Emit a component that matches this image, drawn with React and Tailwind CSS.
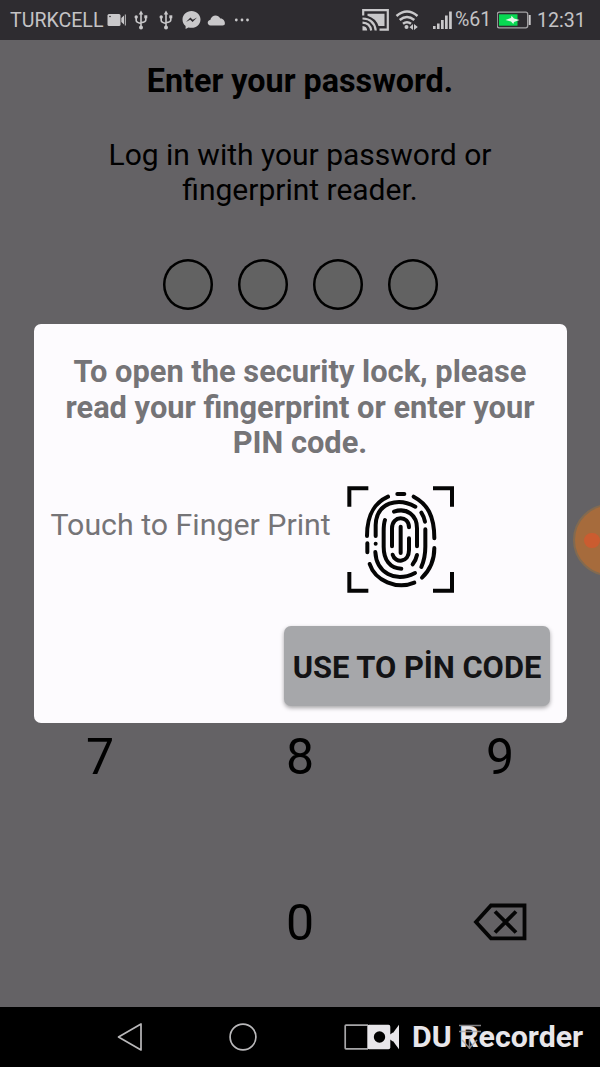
import React from 'react';

function Usb({ className }) {
  return (
    <svg className={className} width="14" height="20" viewBox="0 0 14 20" fill="none" stroke="#c9c8ca" strokeWidth="1.6">
      <path d="M7 3V17M2.2 7.5V10.5Q2.2 12.3 7 13.5M11.8 7.5V10Q11.8 12 7 12.8" />
      <path d="M7 0.5L9.3 4.5H4.7Z" fill="#c9c8ca" stroke="none" />
      <circle cx="7" cy="17.5" r="2" fill="#c9c8ca" stroke="none" />
      <circle cx="2.2" cy="7" r="1.7" fill="#c9c8ca" stroke="none" />
      <path d="M10.3 5.3H13.3V8.3H10.3Z" fill="#c9c8ca" stroke="none" />
    </svg>
  );
}

function StatusBar() {
  return (
    <header className="flex h-10 items-center bg-[#2e2c30] pl-2.5 text-xl leading-none text-[#c4c3c5]">
      <span className="w-[97px] pt-px whitespace-nowrap text-[19.6px]">TURKCELL</span>
      <svg className="shrink-0" width="19" height="14" viewBox="0 0 19 14" fill="#c9c8ca">
        <path d="M2 1H12Q13.5 1 13.5 2.5V11.5Q13.5 13 12 13H2Q0.5 13 0.5 11.5V2.5Q0.5 1 2 1Z" />
        <path d="M14.3 5L17 2.5V11.5L14.3 9ZM17.8 1.5H18.8V12.5H17.8Z" />
        <circle cx="3" cy="3.5" r="0.8" fill="#2e2c30" />
      </svg>
      <Usb className="ml-2 shrink-0" />
      <Usb className="ml-[11px] shrink-0" />
      <svg className="ml-[9px] shrink-0" width="19" height="20" viewBox="0 0 19 20">
        <path d="M9.5 1C4.5 1 0.5 4.7 0.5 9.5C0.5 12.2 1.7 14.5 3.6 16V19L6.4 17.4C13 19.2 18.5 15.3 18.5 9.5C18.5 4.7 14.5 1 9.5 1Z" fill="#c9c8ca" />
        <path d="M4 12L8.4 7.5L10.8 9.7L15 7.5L10.6 12L8.2 9.8Z" fill="#2e2c30" />
      </svg>
      <svg className="ml-1.5 shrink-0" width="19" height="12" viewBox="0 0 19 12" fill="#c9c8ca">
        <path d="M3.5 11.5C0 11.5 -0.3 6.5 3.3 6C4 1.5 10.5 -1 13.4 4.6C17.5 4.2 20 11.5 15.5 11.5Z" />
      </svg>
      <svg className="ml-2 shrink-0" width="16" height="4" viewBox="0 0 16 4" fill="#c9c8ca">
        <circle cx="2.3" cy="2" r="1.4" /><circle cx="8" cy="2" r="1.4" /><circle cx="13.5" cy="2" r="1.4" />
      </svg>
      <svg className="ml-[112px] shrink-0" width="28" height="22" viewBox="0 0 28 22" fill="none" stroke="#c9c8ca" strokeWidth="2.2">
        <path d="M1.2 6.5V1.2H25.8V20.6H17.5" />
        <path d="M5.5 4.8H22.5V17H16.5Q14 9.5 5.5 6.8Z" fill="#c9c8ca" stroke="none" />
        <path d="M0.5 9.5Q12.5 10 13.7 21.5M0.5 13.7Q8 14 9.2 21.5" />
        <path d="M0.5 17Q5 17.3 5.2 21.5H0.5Z" fill="#c9c8ca" stroke="none" />
      </svg>
      <svg className="ml-[5px] shrink-0" width="24" height="20" viewBox="0 0 24 20" fill="none" stroke="#c9c8ca" strokeWidth="2.5">
        <path d="M1.5 6Q12 -3 22.5 6M4.7 10Q12 4 19.3 10M8 13.7Q12 10.7 16 13.7" />
        <circle cx="11.5" cy="17" r="2" fill="#c9c8ca" stroke="none" />
        <path d="M14.5 17.2L18 14V20ZM19 14L22.8 17L19 20Z" fill="#c9c8ca" stroke="none" />
      </svg>
      <svg className="ml-[13px] shrink-0" width="21" height="20" viewBox="0 0 21 20" fill="#c9c8ca">
        <path d="M1 16H3.6V19H1ZM5 13.5H7.6V19H5ZM9 10H11.7V19H9ZM13 5.5H15.7V19H13ZM17.1 1.5H19.8V19H17.1Z" />
      </svg>
      <span className="ml-[2px] w-[42px] whitespace-nowrap text-[19.6px]">%61</span>
      <svg className="shrink-0" width="35" height="18" viewBox="0 0 35 18">
        <rect x="0.2" y="1.2" width="30.5" height="15.6" rx="2" fill="none" stroke="#a5a4a6" strokeWidth="1.3" />
        <rect x="2" y="3.3" width="18.5" height="11.4" fill="#08d952" />
        <path d="M8.5 9L14 7L14.5 4.8L17 7.5L22.5 9L17 11L16.3 13L14 10.6Z" fill="#e3f7e8" />
        <path d="M31.7 4H33.7V14H31.7Z" fill="#c9c8ca" />
      </svg>
      <span className="ml-[5px] pt-[2px] whitespace-nowrap text-[19.6px]">12:31</span>
    </header>
  );
}

function Fingerprint() {
  return (
    <svg className="h-[130px] w-[130px] shrink-0" viewBox="0 0 390 390" fill="none" stroke="#050505" strokeWidth="12" strokeLinecap="round">
      <path d="M43 89V40H94M300 40H351V89M43 297V347H94M300 347H351V297" strokeLinecap="square" />
      <path d="M187 57H208" />
      <path d="M159 65C118 84 96 118 96 183" />
      <path d="M236 65C277 87 298 122 298 190" />
      <path d="M97 205V232M122 206V206.1" />
      <path d="M122 183V150C124 82 190 66 241 95" />
      <path d="M177 110C215 97 246 120 246 160V214" />
      <path d="M259 113Q267 125 270 140" />
      <path d="M271 163V215C271 240 268 255 259 276" />
      <path d="M298 219C298 260 285 285 261 308" />
      <path d="M150 135C146 145 146 155 146 170V215C146 255 165 280 199 281" />
      <path d="M171 214V160C171 120 222 120 222 157" />
      <path d="M222 190V225C222 265 180 265 173 239" />
      <path d="M197 155V234" />
      <path d="M246 240Q243 255 233 268" />
      <path d="M121 231C124 292 180 325 240 294" />
      <path d="M104 267C120 317 185 345 238 323" />
    </svg>
  );
}

function Dialog() {
  return (
    <section className="absolute top-[324px] left-[33.5px] flex h-[399px] w-[533px] flex-col rounded-[7px] bg-[#fdfbfe] text-[#757477]">
      <h2 className="mt-[30px] text-center text-[30.8px] leading-[35.5px] font-bold">
        To open the security lock, please<br />read your fingerprint or enter your<br />PIN code.
      </h2>
      <div className="mt-[14px] flex">
        <p className="mt-[32px] w-[283.5px] pl-[17px] text-[30.3px] leading-[36px] whitespace-nowrap">Touch to Finger Print</p>
        <div className="ml-[18px]"><Fingerprint /></div>
      </div>
      <button className="mt-[21px] ml-[250.5px] h-20 w-[266px] rounded-[7px] bg-[#a6a7aa] pt-[5px] text-[30.9px] leading-none font-bold whitespace-nowrap text-[#131315] shadow-[0_2px_4px_rgba(0,0,0,0.35)]">
        USE TO PİN CODE
      </button>
    </section>
  );
}

function NavBar() {
  return (
    <footer className="flex h-[60px] items-center bg-black pl-[117px]">
      <svg className="shrink-0" width="26" height="30" viewBox="0 0 26 30" fill="none" stroke="#b9b8ba" strokeWidth="1.7" strokeLinejoin="round">
        <path d="M24 2V28L1.5 15Z" />
      </svg>
      <svg className="ml-[86px] shrink-0" width="28" height="28" viewBox="0 0 28 28" fill="none" stroke="#b9b8ba" strokeWidth="1.7">
        <circle cx="14" cy="14" r="12.9" />
      </svg>
      <svg className="ml-[87px] shrink-0" width="55" height="26" viewBox="0 0 55 26">
        <path d="M24 1.2H2Q1.2 1.2 1.2 2V24Q1.2 24.8 2 24.8H24" fill="none" stroke="#a7a6a8" strokeWidth="1.7" />
        <path d="M25 0.8H44.5Q46.3 0.8 46.3 2.8V23.2Q46.3 25.2 44.5 25.2H25Q23.3 25.2 23.3 23.2V2.8Q23.3 0.8 25 0.8Z" fill="#e8e6ea" />
        <path d="M46 13L55 0.8V25.2Z" fill="#e8e6ea" />
        <path d="M46 10.5L49 8.5V17.5L46 15.5Z" fill="#e8e6ea" />
        <circle cx="35.5" cy="13" r="5.7" fill="#000" />
      </svg>
      <div className="relative ml-[13px] text-[30.3px] leading-none font-bold whitespace-nowrap text-[#e8e6ea]">
        <span>DU Recorder</span>
        <svg className="absolute top-[2px] left-[46px]" width="24" height="27" viewBox="0 0 24 27" fill="none" stroke="#a3a1a5" strokeWidth="1.5">
          <path d="M1 1.5H23M1 7.5H23M4 16L11.5 24L19 16M11.5 14V25" opacity=".8" />
        </svg>
      </div>
    </footer>
  );
}

export default function App() {
  return (
    <div className="relative flex h-[1067px] w-[600px] flex-col overflow-hidden bg-[#646265] font-[Roboto,sans-serif] text-black">
      <StatusBar />
      <main className="flex flex-1 flex-col">
        <h1 className="mt-[23px] text-center text-[32.3px] leading-9 font-bold">Enter your password.</h1>
        <p className="mt-[38px] text-center text-[30px] leading-[35px]">
          Log in with your password or<br />fingerprint reader.
        </p>
        <div className="mt-[52px] flex justify-center gap-[25px]">
          {[0, 1, 2, 3].map((i) => (
            <span key={i} className="h-[50.5px] w-[50px] rounded-full bg-[#626262] shadow-[inset_0_0_0_2.5px_#000]" />
          ))}
        </div>
        <div className="mt-auto grid grid-cols-3 grid-rows-[166px_166px] pb-[2px] text-center text-[50px] leading-[168px]">
          <span>7</span>
          <span>8</span>
          <span>9</span>
          <span className="col-start-2">0</span>
          <span className="flex items-center justify-center">
            <svg width="54" height="38" viewBox="0 0 54 38" fill="none" stroke="#050505" strokeWidth="3.8">
              <path d="M18 2.5H51.5V35.3H18L3 19ZM22 8.5L43 29.5M43 8.5L22 29.5" />
            </svg>
          </span>
        </div>
      </main>
      <NavBar />
      <Dialog />
      <div className="absolute top-[504px] left-[573px] h-[72px] w-[72px] rounded-full border-2 border-[#826a50] bg-[#a66b3c]" />
      <div className="absolute top-[533px] left-[584px] h-[15px] w-[16px] rounded-full bg-[#cb5c30]" />
    </div>
  );
}
